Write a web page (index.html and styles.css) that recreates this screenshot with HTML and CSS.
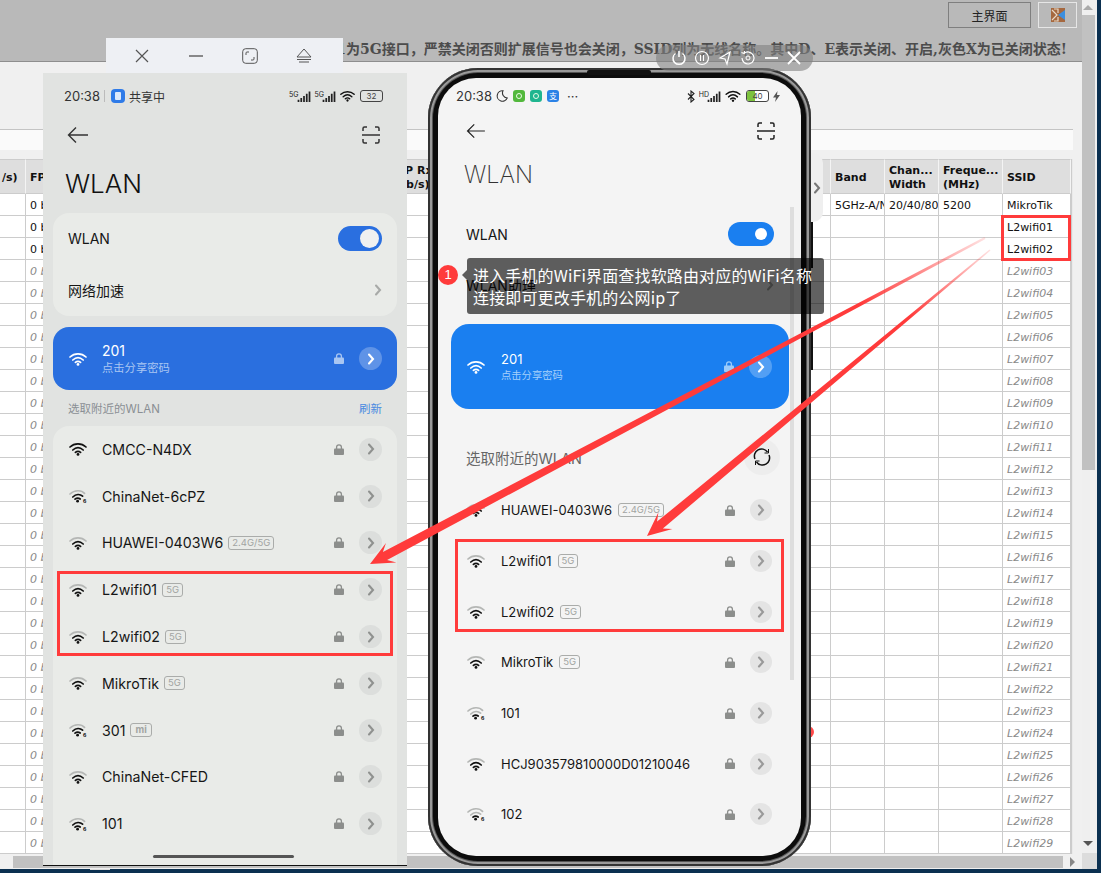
FILE: index.html
```html
<!DOCTYPE html>
<html lang="zh-CN">
<head>
  <meta charset="UTF-8" />
  <title>WLAN</title>
  <link rel="stylesheet" href="styles.css">
</head>
<body>
  <svg class="defs" width="0" height="0">
    <symbol id="wifi" viewBox="0 0 18 14">
      <path class="arc-outer" d="M1 5C5.500 .8 12.500 .8 17 5" />
      <path class="arc" d="M3.800 8C7 5 11 5 14.200 8" />
      <path class="arc" d="M6.400 10.400C8 9 10 9 11.600 10.400" />
      <circle class="dot" cx="9" cy="12.400" r="1.400" />
    </symbol>
    <symbol id="wifi6" viewBox="0 0 18 14">
      <path class="arc-outer" d="M1 5C5.500 .8 12.500 .8 15.500 4.400" />
      <path class="arc-mid" d="M3.800 8C7 5 11 5 13.600 7.200" />
      <path class="arc" d="M6 10.200C7.600 8.800 9.600 8.800 11.200 10" />
      <circle class="dot" cx="8.600" cy="12.200" r="1.400" />
      <text class="six" x="14" y="13.600">6</text>
    </symbol>
    <symbol id="lock" viewBox="0 0 10 11">
      <path d="M2.600 5V3.200a2.400 2.400 0 0 1 4.800 0V5" fill="none" stroke="currentColor" stroke-width="1.300" />
      <rect y="4.400" width="10" height="6.600" rx="1" fill="currentColor" />
    </symbol>
    <symbol id="chev" viewBox="0 0 8 12">
      <path d="M2 1.500 6 6 2 10.500" fill="none" stroke="currentColor" stroke-width="2.100" stroke-linecap="round" />
    </symbol>
    <symbol id="back" viewBox="0 0 22 18">
      <path d="M21 9H1.500M9 1.500 1.500 9 9 16.500" fill="none" stroke="currentColor" stroke-width="1.400" />
    </symbol>
    <symbol id="scan" viewBox="0 0 18 18">
      <path d="M1 5V2.500Q1 1 2.500 1H5M13 1h2.500Q17 1 17 2.500V5M1 13v2.500Q1 17 2.500 17H5M13 17h2.500q1.500 0 1.500-1.500V13M0 9h18" fill="none" stroke="currentColor" stroke-width="1.500" />
    </symbol>
    <symbol id="bars" viewBox="0 0 14 12">
      <path d="M1 12V9.500M4 12V7.500M7 12V5.500M10 12V3M13 12V.500" fill="none" stroke="currentColor" stroke-width="1.900" />
    </symbol>
  </svg>

  <div class="page">
    <div class="main">
      <div class="content">
        <header class="topbar">
          <div class="topbar-btns">
            <button class="btn">主界面</button>
            <button class="btn btn-icon">
              <svg width="14" height="14" viewBox="0 0 14 14"><rect width="14" height="14" fill="#a5683f"/><path d="M1 2 6 7 1 12M3 1h4v4M3 13h4V9" fill="none" stroke="#e8d9c8" stroke-width="1.200"/><path d="M14 2 7 7l7 5z" fill="#3b8fe0"/></svg>
            </button>
          </div>
          <p class="notice">1为5G接口，严禁关闭否则扩展信号也会关闭，SSID列为无线名称。其中D、E表示关闭、开启,灰色X为已关闭状态!</p>
        </header>
        <div class="tools"></div>
        <div class="strip"></div>
        <div class="table-wrap">
          <table class="grid">
            <colgroup>
              <col class="c-a"><col class="c-b"><col class="c-c"><col class="c-d"><col class="c-e"><col class="c-f"><col class="c-g"><col class="c-h">
            </colgroup>
            <thead>
              <tr><th>/s)</th><th>FP</th><th></th><th>IP Rx<br>(b/s)</th><th>Band</th><th>Chan...<br>Width</th><th>Freque...<br>(MHz)</th><th>SSID</th></tr>
            </thead>
            <tbody>
              <tr><td></td><td>0 b</td><td></td><td></td><td>5GHz-A/N</td><td>20/40/80</td><td>5200</td><td>MikroTik</td></tr>
              <tr><td></td><td>0 b</td><td></td><td></td><td></td><td></td><td></td><td>L2wifi01</td></tr>
              <tr><td></td><td>0 b</td><td></td><td></td><td></td><td></td><td></td><td>L2wifi02</td></tr>
              <tr class="off"><td></td><td>0 b</td><td></td><td></td><td></td><td></td><td></td><td>L2wifi03</td></tr>
              <tr class="off"><td></td><td>0 b</td><td></td><td></td><td></td><td></td><td></td><td>L2wifi04</td></tr>
              <tr class="off"><td></td><td>0 b</td><td></td><td></td><td></td><td></td><td></td><td>L2wifi05</td></tr>
              <tr class="off"><td></td><td>0 b</td><td></td><td></td><td></td><td></td><td></td><td>L2wifi06</td></tr>
              <tr class="off"><td></td><td>0 b</td><td></td><td></td><td></td><td></td><td></td><td>L2wifi07</td></tr>
              <tr class="off"><td></td><td>0 b</td><td></td><td></td><td></td><td></td><td></td><td>L2wifi08</td></tr>
              <tr class="off"><td></td><td>0 b</td><td></td><td></td><td></td><td></td><td></td><td>L2wifi09</td></tr>
              <tr class="off"><td></td><td>0 b</td><td></td><td></td><td></td><td></td><td></td><td>L2wifi10</td></tr>
              <tr class="off"><td></td><td>0 b</td><td></td><td></td><td></td><td></td><td></td><td>L2wifi11</td></tr>
              <tr class="off"><td></td><td>0 b</td><td></td><td></td><td></td><td></td><td></td><td>L2wifi12</td></tr>
              <tr class="off"><td></td><td>0 b</td><td></td><td></td><td></td><td></td><td></td><td>L2wifi13</td></tr>
              <tr class="off"><td></td><td>0 b</td><td></td><td></td><td></td><td></td><td></td><td>L2wifi14</td></tr>
              <tr class="off"><td></td><td>0 b</td><td></td><td></td><td></td><td></td><td></td><td>L2wifi15</td></tr>
              <tr class="off"><td></td><td>0 b</td><td></td><td></td><td></td><td></td><td></td><td>L2wifi16</td></tr>
              <tr class="off"><td></td><td>0 b</td><td></td><td></td><td></td><td></td><td></td><td>L2wifi17</td></tr>
              <tr class="off"><td></td><td>0 b</td><td></td><td></td><td></td><td></td><td></td><td>L2wifi18</td></tr>
              <tr class="off"><td></td><td>0 b</td><td></td><td></td><td></td><td></td><td></td><td>L2wifi19</td></tr>
              <tr class="off"><td></td><td>0 b</td><td></td><td></td><td></td><td></td><td></td><td>L2wifi20</td></tr>
              <tr class="off"><td></td><td>0 b</td><td></td><td></td><td></td><td></td><td></td><td>L2wifi21</td></tr>
              <tr class="off"><td></td><td>0 b</td><td></td><td></td><td></td><td></td><td></td><td>L2wifi22</td></tr>
              <tr class="off"><td></td><td>0 b</td><td></td><td></td><td></td><td></td><td></td><td>L2wifi23</td></tr>
              <tr class="off"><td></td><td>0 b</td><td></td><td></td><td></td><td></td><td></td><td>L2wifi24</td></tr>
              <tr class="off"><td></td><td>0 b</td><td></td><td></td><td></td><td></td><td></td><td>L2wifi25</td></tr>
              <tr class="off"><td></td><td>0 b</td><td></td><td></td><td></td><td></td><td></td><td>L2wifi26</td></tr>
              <tr class="off"><td></td><td>0 b</td><td></td><td></td><td></td><td></td><td></td><td>L2wifi27</td></tr>
              <tr class="off"><td></td><td>0 b</td><td></td><td></td><td></td><td></td><td></td><td>L2wifi28</td></tr>
              <tr class="off"><td></td><td>0 b</td><td></td><td></td><td></td><td></td><td></td><td>L2wifi29</td></tr>
            </tbody>
          </table>
        </div>
        <div class="hscroll">
          <div class="hscroll-thumb"></div>
          <span class="arrow-right"></span>
        </div>
      </div>
      <div class="vscroll">
        <span class="arrow-up"></span>
        <div class="vscroll-thumb"></div>
        <span class="arrow-down"></span>
        <div class="corner"></div>
      </div>
    </div>
    <div class="taskbar"><span class="task-mark"></span></div>
  </div>

  <!-- 表格上的红框 -->
  <div class="mark mark-ssid"></div>
  <div class="red-dot"></div>
  <div class="side-tab"><svg width="8" height="12"><use href="#chev"/></svg></div>

  <!-- 左边手机窗口 -->
  <div class="win-title">
    <span class="win-btn"><svg width="14" height="14" viewBox="0 0 14 14"><path d="M1 1 13 13M13 1 1 13" fill="none" stroke="#555" stroke-width="1.200"/></svg></span>
    <span class="win-btn"><svg width="14" height="14" viewBox="0 0 14 14"><path d="M0 7h14" stroke="#666" stroke-width="1.500"/></svg></span>
    <span class="win-btn"><svg width="16" height="16" viewBox="0 0 16 16"><rect x=".7" y=".7" width="14.600" height="14.600" rx="3" fill="none" stroke="#555"/><path d="M4 7V5Q4 4 5 4H7M12 9v2q0 1-1 1H9" fill="none" stroke="#555"/></svg></span>
    <span class="win-btn"><svg width="16" height="15" viewBox="0 0 16 15"><path d="M8 1 15 9H1zM1 11.500h14M3 14h10" fill="none" stroke="#555"/></svg></span>
  </div>
  <section class="win">
    <div class="win-status">
      <span class="time">20:38</span>
      <span class="sep"></span>
      <span class="share-icon"><i></i></span>
      <span class="share-text">共享中</span>
      <div class="status-right">
        <span class="sig"><small>5G</small><svg width="14" height="11"><use href="#bars"/></svg></span>
        <span class="sig"><small>5G</small><svg width="14" height="11"><use href="#bars"/></svg></span>
        <svg class="wifi wifi-solid" width="15" height="12"><use href="#wifi"/></svg>
        <span class="batt">32</span>
      </div>
    </div>
    <div class="win-nav">
      <svg width="22" height="18"><use href="#back"/></svg>
      <svg width="18" height="18"><use href="#scan"/></svg>
    </div>
    <h1 class="win-h1">WLAN</h1>
    <div class="card">
      <div class="card-row">
        <span>WLAN</span>
        <span class="toggle"></span>
      </div>
      <div class="card-row">
        <span>网络加速</span>
        <svg class="more" width="8" height="14"><use href="#chev"/></svg>
      </div>
    </div>
    <div class="current">
      <svg class="wifi wifi-white" width="18" height="14"><use href="#wifi"/></svg>
      <div class="current-text">
        <div class="current-name">201</div>
        <div class="current-sub">点击分享密码</div>
      </div>
      <svg class="lock" width="10" height="11"><use href="#lock"/></svg>
      <span class="go go-light"><svg width="8" height="12"><use href="#chev"/></svg></span>
    </div>
    <div class="sec-head">
      <span>选取附近的WLAN</span>
      <span class="refresh">刷新</span>
    </div>
    <div class="card net-list">
      <div class="net"><svg class="wifi wifi-solid" width="18" height="14"><use href="#wifi"/></svg><span class="net-name">CMCC-N4DX</span><svg class="lock" width="10" height="11"><use href="#lock"/></svg><span class="go"><svg width="8" height="12"><use href="#chev"/></svg></span></div>
      <div class="net"><svg class="wifi" width="18" height="14"><use href="#wifi6"/></svg><span class="net-name">ChinaNet-6cPZ</span><svg class="lock" width="10" height="11"><use href="#lock"/></svg><span class="go"><svg width="8" height="12"><use href="#chev"/></svg></span></div>
      <div class="net"><svg class="wifi" width="18" height="14"><use href="#wifi"/></svg><span class="net-name">HUAWEI-0403W6</span><span class="tag">2.4G/5G</span><svg class="lock" width="10" height="11"><use href="#lock"/></svg><span class="go"><svg width="8" height="12"><use href="#chev"/></svg></span></div>
      <div class="net"><svg class="wifi" width="18" height="14"><use href="#wifi"/></svg><span class="net-name">L2wifi01</span><span class="tag">5G</span><svg class="lock" width="10" height="11"><use href="#lock"/></svg><span class="go"><svg width="8" height="12"><use href="#chev"/></svg></span></div>
      <div class="net"><svg class="wifi" width="18" height="14"><use href="#wifi"/></svg><span class="net-name">L2wifi02</span><span class="tag">5G</span><svg class="lock" width="10" height="11"><use href="#lock"/></svg><span class="go"><svg width="8" height="12"><use href="#chev"/></svg></span></div>
      <div class="net"><svg class="wifi" width="18" height="14"><use href="#wifi"/></svg><span class="net-name">MikroTik</span><span class="tag">5G</span><svg class="lock" width="10" height="11"><use href="#lock"/></svg><span class="go"><svg width="8" height="12"><use href="#chev"/></svg></span></div>
      <div class="net"><svg class="wifi" width="18" height="14"><use href="#wifi6"/></svg><span class="net-name">301</span><span class="tag tag-mi">mi</span><svg class="lock" width="10" height="11"><use href="#lock"/></svg><span class="go"><svg width="8" height="12"><use href="#chev"/></svg></span></div>
      <div class="net"><svg class="wifi" width="18" height="14"><use href="#wifi"/></svg><span class="net-name">ChinaNet-CFED</span><svg class="lock" width="10" height="11"><use href="#lock"/></svg><span class="go"><svg width="8" height="12"><use href="#chev"/></svg></span></div>
      <div class="net"><svg class="wifi" width="18" height="14"><use href="#wifi6"/></svg><span class="net-name">101</span><svg class="lock" width="10" height="11"><use href="#lock"/></svg><span class="go"><svg width="8" height="12"><use href="#chev"/></svg></span></div>
    </div>
    <div class="home-bar"></div>
  </section>
  <div class="mark mark-left"></div>

  <!-- 右边手机 -->
  <span class="phone-key phone-key-a"></span>
  <span class="phone-key phone-key-b"></span>
  <section class="phone">
    <div class="phone-notch"></div>
    <div class="screen">
      <div class="phone-status">
        <span class="time">20:38</span>
        <svg class="moon" width="12" height="12" viewBox="0 0 12 12"><path d="M7 .8A5.200 5.200 0 1 0 11.200 8 5 5 0 0 1 7 .8z" fill="none" stroke="#333" stroke-width="1.100"/></svg>
        <span class="app app-green"></span>
        <span class="app app-teal"></span>
        <span class="app app-blue">支</span>
        <span class="dots">···</span>
        <div class="status-right">
          <svg width="8" height="13" viewBox="0 0 8 13"><path d="M1 3.500 7 9.500 4 12V1L7 3.500 1 9.500" fill="none" stroke="#222" stroke-width="1.100"/></svg>
          <span class="sig"><small>HD</small><svg width="14" height="11"><use href="#bars"/></svg></span>
          <svg class="wifi wifi-solid" width="16" height="12"><use href="#wifi"/></svg>
          <span class="batt batt-charge"><i></i><b>40</b></span>
          <svg width="7" height="11" viewBox="0 0 7 11"><path d="M4.500 0 0 6.500h3L2 11l5-7H4z" fill="#555"/></svg>
        </div>
      </div>
      <div class="phone-nav">
        <svg width="20" height="16"><use href="#back"/></svg>
        <svg width="18" height="18"><use href="#scan"/></svg>
      </div>
      <h1 class="phone-h1">WLAN</h1>
      <div class="phone-row phone-row-a">
        <span>WLAN</span>
        <span class="toggle toggle-b"></span>
      </div>
      <div class="phone-row phone-row-b">
        <span>WLAN助理</span>
        <svg class="more" width="8" height="14"><use href="#chev"/></svg>
      </div>
      <div class="current current-b">
        <svg class="wifi wifi-white" width="18" height="14"><use href="#wifi"/></svg>
        <div class="current-text">
          <div class="current-name">201</div>
          <div class="current-sub">点击分享密码</div>
        </div>
        <svg class="lock" width="10" height="11"><use href="#lock"/></svg>
        <span class="go go-light"><svg width="8" height="12"><use href="#chev"/></svg></span>
      </div>
      <div class="phone-sec">
        <span>选取附近的WLAN</span>
        <span class="reload">
          <svg width="18" height="18" viewBox="0 0 18 18"><path d="M2 11A7.200 7.200 0 0 1 14.500 4M16 7A7.200 7.200 0 0 1 3.500 14" fill="none" stroke="#111" stroke-width="1.500"/><path d="M15.500 1v4h-4M2.500 17v-4h4" fill="none" stroke="#111" stroke-width="1"/></svg>
        </span>
      </div>
      <div class="net net-b"><svg class="wifi" width="18" height="14"><use href="#wifi"/></svg><span class="net-name">HUAWEI-0403W6</span><span class="tag">2.4G/5G</span><svg class="lock" width="10" height="11"><use href="#lock"/></svg><span class="go"><svg width="8" height="12"><use href="#chev"/></svg></span></div>
      <div class="net net-b"><svg class="wifi" width="18" height="14"><use href="#wifi"/></svg><span class="net-name">L2wifi01</span><span class="tag">5G</span><svg class="lock" width="10" height="11"><use href="#lock"/></svg><span class="go"><svg width="8" height="12"><use href="#chev"/></svg></span></div>
      <div class="net net-b"><svg class="wifi" width="18" height="14"><use href="#wifi"/></svg><span class="net-name">L2wifi02</span><span class="tag">5G</span><svg class="lock" width="10" height="11"><use href="#lock"/></svg><span class="go"><svg width="8" height="12"><use href="#chev"/></svg></span></div>
      <div class="net net-b"><svg class="wifi" width="18" height="14"><use href="#wifi"/></svg><span class="net-name">MikroTik</span><span class="tag">5G</span><svg class="lock" width="10" height="11"><use href="#lock"/></svg><span class="go"><svg width="8" height="12"><use href="#chev"/></svg></span></div>
      <div class="net net-b"><svg class="wifi" width="18" height="14"><use href="#wifi6"/></svg><span class="net-name">101</span><svg class="lock" width="10" height="11"><use href="#lock"/></svg><span class="go"><svg width="8" height="12"><use href="#chev"/></svg></span></div>
      <div class="net net-b"><svg class="wifi" width="18" height="14"><use href="#wifi"/></svg><span class="net-name">HCJ903579810000D01210046</span><svg class="lock" width="10" height="11"><use href="#lock"/></svg><span class="go"><svg width="8" height="12"><use href="#chev"/></svg></span></div>
      <div class="net net-b"><svg class="wifi" width="18" height="14"><use href="#wifi6"/></svg><span class="net-name">102</span><svg class="lock" width="10" height="11"><use href="#lock"/></svg><span class="go"><svg width="8" height="12"><use href="#chev"/></svg></span></div>
      <div class="phone-scroll"></div>
    </div>
  </section>
  <div class="mark mark-right"></div>

  <!-- 录屏工具条 -->
  <div class="float-bar">
    <svg width="16" height="16" viewBox="0 0 16 16"><path d="M4.500 3.500a6 6 0 1 0 7 0M8 1v6" fill="none" stroke="#fff" stroke-width="1.500"/></svg>
    <svg width="16" height="16" viewBox="0 0 16 16"><circle cx="8" cy="8" r="6.500" fill="none" stroke="#fff" stroke-width="1.200"/><path d="M6.500 5v6M9.500 5v6" stroke="#fff"/></svg>
    <svg width="16" height="16" viewBox="0 0 16 16"><path d="M3 8 13 2 10 14 8 9z" fill="none" stroke="#fff" stroke-width="1.200"/></svg>
    <svg width="16" height="16" viewBox="0 0 16 16"><path d="M4 3.500a6 6 0 1 1-2 4.500M1.500 2.500 4 3.500 4.500 1" fill="none" stroke="#fff" stroke-width="1.200"/><circle cx="8" cy="8" r="2" fill="none" stroke="#fff"/></svg>
    <svg width="16" height="16" viewBox="0 0 16 16"><path d="M2 8h13" stroke="#fff" stroke-width="1.800"/></svg>
    <svg width="16" height="16" viewBox="0 0 16 16"><path d="M2 2 14 14M14 2 2 14" stroke="#fff" stroke-width="1.800"/></svg>
  </div>

  <!-- 红色箭头 -->
  <svg class="arrows" width="1101" height="873" viewBox="0 0 1101 873">
    <defs>
      <linearGradient id="fadeA" gradientUnits="userSpaceOnUse" x1="985" y1="238" x2="860" y2="304">
        <stop offset="0" stop-color="#ff3b3b" stop-opacity=".15"/>
        <stop offset="1" stop-color="#ff3b3b"/>
      </linearGradient>
      <linearGradient id="fadeB" gradientUnits="userSpaceOnUse" x1="990" y1="250" x2="910" y2="317">
        <stop offset="0" stop-color="#ff3b3b" stop-opacity=".15"/>
        <stop offset="1" stop-color="#ff3b3b"/>
      </linearGradient>
    </defs>
    <polygon fill="url(#fadeA)" points="985.500,239 387.100,560 396.400,562.400 370,564 386,543 382.900,552 984.500,237"/>
    <polygon fill="url(#fadeB)" points="990.500,250.500 662.900,528.600 672.400,529 647,536 658.400,512.200 657.100,521.600 989.500,249.500"/>
  </svg>

  <!-- 提示框 -->
  <span class="tip-dot">1</span>
  <div class="tip">进入手机的WiFi界面查找软路由对应的WiFi名称<br>连接即可更改手机的公网ip了</div>
</body>
</html>
```

FILE: styles.css
```css
html, body {
  margin: 0;
  padding: 0;
}
body {
  position: relative;
  width: 1101px;
  height: 873px;
  overflow: hidden;
  background: #0b3050;
  font-family: "DejaVu Sans", "Noto Sans CJK SC", sans-serif;
  font-size: 11px;
}
.defs {
  position: absolute;
}
.arc, .arc-outer, .arc-mid {
  fill: none;
  stroke: currentColor;
  stroke-width: 1.7;
  stroke-linecap: round;
}
.arc-outer {
  stroke: var(--outer, #b5b7b5);
}
.arc-mid {
  stroke: var(--mid, currentColor);
}
.dot {
  fill: currentColor;
}
.six {
  font: bold 6px "Liberation Sans", sans-serif;
  fill: currentColor;
}

/* 底层页面 */
.page {
  display: flex;
  flex-direction: column;
  height: 873px;
}
.main {
  display: flex;
  height: 869px;
}
.content {
  width: 1082px;
  display: flex;
  flex-direction: column;
  background: #f0f0f0;
}
.topbar {
  height: 61px;
  background: #b9b9b9;
  border-bottom: 1px solid #8e8e8e;
  display: flex;
  flex-direction: column;
  align-items: flex-end;
}
.topbar-btns {
  display: flex;
  gap: 7px;
  padding: 2px 5px 0 0;
}
.btn {
  height: 26px;
  width: 83px;
  padding: 0;
  background: #b9b9b9;
  border: 1px solid #7f7f7f;
  font: 12px "Noto Sans CJK SC", sans-serif;
  color: #222;
}
.btn-icon {
  width: 39px;
  border-color: #e6e6e6;
  display: flex;
  align-items: center;
  justify-content: center;
}
.notice {
  margin: 12px 15px 0 0;
  white-space: nowrap;
  font: bold 14px/18px "DejaVu Serif", "Noto Sans CJK SC", serif;
  color: #4c4c4c;
}
.tools {
  height: 67px;
}
.strip {
  height: 20px;
  margin-right: 9px;
  background: #fafafa;
  border-top: 1px solid #c4c4c4;
}
.table-wrap {
  margin-top: 9px;
  height: 695px;
  overflow: hidden;
}
.grid {
  width: 1071px;
  table-layout: fixed;
  border-collapse: separate;
  border-spacing: 0;
  background: #fff;
  color: #111;
  box-shadow: 1px 0 1px #ccc;
}
.c-a { width: 26px; }
.c-b { width: 58px; }
.c-c { width: 313px; }
.c-d { width: 434px; }
.c-e { width: 54px; }
.c-f { width: 54px; }
.c-g { width: 64px; }
.c-h { width: 68px; }
.grid th {
  height: 35px;
  padding: 2px 0 0 4px;
  box-sizing: border-box;
  background: #dedede;
  border-top: 1px solid #ccc;
  border-right: 1px solid #f4f4f4;
  border-bottom: 1px solid #ccc;
  text-align: left;
  font-weight: bold;
  line-height: 14px;
  overflow: hidden;
  white-space: nowrap;
}
.grid td {
  height: 22px;
  padding: 1px 0 0 4px;
  box-sizing: border-box;
  border-right: 1px solid #ccc;
  border-bottom: 1px solid #ccc;
  overflow: hidden;
  white-space: nowrap;
}
.grid .off td {
  font-style: italic;
  color: #8a8a8a;
}
.grid th:first-child {
  padding-left: 2px;
}
.hscroll {
  height: 15px;
  display: flex;
  align-items: center;
  padding-left: 13px;
}
.hscroll-thumb {
  width: 1050px;
  height: 12px;
  background: #c1c1c1;
}
.arrow-right {
  margin-left: 7px;
  border-left: 5px solid #888;
  border-top: 5px solid transparent;
  border-bottom: 5px solid transparent;
}
.vscroll {
  width: 15px;
  margin-right: 4px;
  background: #efefef;
  display: flex;
  flex-direction: column;
  align-items: flex-start;
}
.arrow-up {
  margin: 5px 0 5px 1px;
  border-bottom: 5px solid #aaa;
  border-left: 5px solid transparent;
  border-right: 5px solid transparent;
}
.vscroll-thumb {
  width: 13px;
  height: 455px;
  background: #c1c1c1;
}
.arrow-down {
  margin: auto 0 7px 1px;
  border-top: 5px solid #555;
  border-left: 5px solid transparent;
  border-right: 5px solid transparent;
}
.corner {
  width: 15px;
  height: 16px;
  background: #dcdcdc;
}
.taskbar {
  height: 4px;
  background: #0b3050;
}
.task-mark {
  display: block;
  width: 20px;
  height: 1px;
  margin-left: 90px;
  background: #ddd;
}

/* 红框 */
.mark {
  position: absolute;
  box-sizing: border-box;
  border: 3px solid #ff3b3b;
}
.mark-ssid { left: 1001px; top: 215px; width: 70px; height: 46px; }
.mark-left { left: 57px; top: 571px; width: 336px; height: 85px; }
.mark-right { left: 455px; top: 539px; width: 329px; height: 93px; }
.red-dot {
  position: absolute;
  left: 802px;
  top: 726px;
  width: 12px;
  height: 12px;
  border-radius: 50%;
  background: #ff4a4a;
}
.side-tab {
  position: absolute;
  left: 805px;
  top: 153px;
  width: 18px;
  height: 69px;
  padding-right: 2px;
  box-sizing: border-box;
  display: flex;
  align-items: center;
  justify-content: flex-end;
  background: #efefef;
  border-radius: 0 10px 10px 0;
  color: #777;
}

/* 左窗口 */
.win-title {
  position: absolute;
  left: 106px;
  top: 38px;
  width: 237px;
  height: 35px;
  padding-left: 9px;
  box-sizing: border-box;
  background: #eef0f4;
  display: flex;
  align-items: center;
}
.win-btn {
  width: 54px;
  display: flex;
  justify-content: center;
}
.win {
  position: absolute;
  left: 43px;
  top: 73px;
  width: 364px;
  height: 793px;
  box-sizing: border-box;
  overflow: hidden;
  background: #e1e3e1;
  border-bottom: 1px solid #111;
  font-family: Inter, "Noto Sans CJK SC", sans-serif;
  color: #161616;
}
.win-status {
  height: 46px;
  padding: 0 24px 0 21px;
  display: flex;
  align-items: center;
}
.time {
  font-size: 13px;
  color: #333;
}
.sep {
  width: 1px;
  height: 12px;
  margin: 0 6px 0 4px;
  background: #bbb;
}
.share-icon {
  width: 14px;
  height: 14px;
  margin-right: 4px;
  border-radius: 4px;
  background: #2f7be8;
  display: flex;
  align-items: center;
  justify-content: center;
}
.share-icon i {
  width: 6px;
  height: 8px;
  border-radius: 1px;
  background: #dce9fb;
}
.share-text {
  font-size: 12px;
  color: #333;
}
.status-right {
  margin-left: auto;
  display: flex;
  align-items: center;
  gap: 4px;
  color: #222;
}
.sig {
  display: flex;
  align-items: flex-end;
}
.sig small {
  align-self: flex-start;
  margin-right: -2px;
  font-size: 7px;
  line-height: 7px;
}
.batt {
  width: 21px;
  height: 10px;
  margin-left: 1px;
  border: 1px solid #444;
  border-radius: 3px;
  font-size: 8px;
  line-height: 10px;
  text-align: center;
  color: #444;
  position: relative;
}
.win-nav {
  height: 32px;
  padding: 0 27px 0 24px;
  display: flex;
  align-items: center;
  justify-content: space-between;
  color: #333;
}
.win-h1 {
  height: 62px;
  margin: 0;
  padding-left: 22px;
  font-size: 26px;
  font-weight: 300;
  line-height: 66px;
  color: #111;
}
.card {
  margin: 0 10px;
  border-radius: 16px;
  background: #e9ebe8;
}
.card-row {
  height: 51.5px;
  padding: 0 15px;
  display: flex;
  align-items: center;
  justify-content: space-between;
  font-size: 14px;
}
.toggle {
  position: relative;
  width: 44px;
  height: 25px;
  border-radius: 13px;
  background: #2a6fe0;
}
.toggle::after {
  content: "";
  position: absolute;
  right: 3px;
  top: 3px;
  width: 19px;
  height: 19px;
  border-radius: 50%;
  background: #f0f0f0;
}
.more {
  color: #a8aaa8;
}
.current {
  margin: 11px 10px 0;
  height: 63px;
  padding: 0 15px 0 16px;
  box-sizing: border-box;
  border-radius: 16px;
  background: #2a6fdf;
  display: flex;
  align-items: center;
  color: #fff;
}
.current-text {
  margin-left: 15px;
}
.current-name {
  font-size: 14px;
  line-height: 18px;
}
.current-sub {
  font-size: 11.300px;
  line-height: 16px;
  color: #a9c6f2;
}
.wifi {
  flex: none;
  color: #111;
}
.wifi-solid {
  --outer: currentColor;
}
.wifi-white {
  color: #fff;
  --outer: #fff;
}
.lock {
  flex: none;
  margin-left: auto;
  color: #8c8e8c;
}
.current .lock {
  color: #a9c6f2;
}
.go {
  flex: none;
  width: 23px;
  height: 23px;
  margin-left: 15px;
  border-radius: 50%;
  background: #dcdedc;
  color: #8f918f;
  display: flex;
  align-items: center;
  justify-content: center;
}
.go-light {
  background: rgba(255, 255, 255, 0.25);
  color: #fff;
}
.sec-head {
  height: 36px;
  padding: 0 15px;
  margin: 0 10px;
  display: flex;
  align-items: center;
  justify-content: space-between;
  font-size: 11.500px;
  color: #8a8f94;
}
.refresh {
  color: #4a8ae0;
}
.net-list {
  height: 480px;
}
.net {
  height: 46.800px;
  padding: 0 15px 0 16px;
  display: flex;
  align-items: center;
}
.net-name {
  margin-left: 15px;
  font-size: 14.200px;
  white-space: nowrap;
}
.tag {
  margin-left: 5px;
  padding: 0 3px;
  border: 1px solid #aaacaa;
  border-radius: 3px;
  font-size: 9.500px;
  line-height: 12px;
  color: #a2a4a2;
}
.tag-mi {
  padding: 0 4px;
  font-weight: 700;
}
.home-bar {
  position: absolute;
  left: 110px;
  top: 782px;
  width: 141px;
  height: 3px;
  border-radius: 2px;
  background: #555;
}

/* 右手机 */
.phone {
  position: absolute;
  left: 428px;
  top: 68px;
  width: 383px;
  height: 798px;
  padding: 10px;
  box-sizing: border-box;
  border-radius: 50px;
  background: #0c0c0c;
  box-shadow: inset 0 0 0 2px #333, inset 0 0 0 4px #9a9a9a, inset 0 0 0 5px #555;
  font-family: Inter, "Noto Sans CJK SC", sans-serif;
  color: #161616;
}
.phone-key {
  position: absolute;
  left: 809px;
  width: 4px;
  background: #111;
}
.phone-key-a { top: 222px; height: 46px; }
.phone-key-b { top: 328px; height: 42px; }
.phone-notch {
  position: absolute;
  left: 159px;
  top: 2px;
  width: 64px;
  height: 5px;
  background: #111;
  border-radius: 2px;
}
.screen {
  position: relative;
  height: 778px;
  overflow: hidden;
  border-radius: 38px;
  background: #f4f4f4;
}
.phone-status {
  height: 36px;
  padding: 0 21px 0 18px;
  display: flex;
  align-items: center;
}
.moon {
  margin-left: 4px;
}
.app {
  position: relative;
  width: 12px;
  height: 12px;
  margin-left: 5px;
  border-radius: 3px;
  font-size: 8px;
  line-height: 12px;
  text-align: center;
  color: #fff;
}
.app-green { background: #52b83c; }
.app-teal { background: #1fb58f; }
.app-blue { background: #2a82e6; }
.app-green::after, .app-teal::after {
  content: "";
  position: absolute;
  left: 3px;
  top: 3px;
  width: 4px;
  height: 4px;
  border: 1px solid #eafbe6;
  border-radius: 50%;
}
.dots {
  margin-left: 8px;
  font-size: 13px;
  color: #333;
}
.batt-charge {
  background: #fff;
  overflow: hidden;
}
.batt-charge i {
  position: absolute;
  left: 0;
  top: 0;
  bottom: 0;
  width: 40%;
  background: #7cc23e;
}
.batt-charge b {
  position: relative;
  font-weight: 400;
}
.phone-nav {
  height: 34px;
  padding: 0 26px 0 28px;
  display: flex;
  align-items: center;
  justify-content: space-between;
  color: #222;
}
.phone-h1 {
  height: 56px;
  margin: 0;
  padding-left: 26px;
  font-size: 23.500px;
  font-weight: 200;
  line-height: 54px;
  color: #333;
}
.phone-row {
  padding: 0 27px 0 28px;
  display: flex;
  align-items: center;
  justify-content: space-between;
  font-size: 14px;
}
.phone-row-a { height: 60px; }
.phone-row-b { height: 42px; }
.toggle-b {
  width: 46px;
  height: 24px;
  background: #1a7ff0;
}
.toggle-b::after {
  right: 7px;
  top: 6px;
  width: 12px;
  height: 12px;
  background: #fff;
}
.current-b {
  margin: 18px 12px 0 13px;
  height: 85px;
  padding: 0 17px 0 16px;
  border-radius: 18px;
  background: #1a7ff0;
}
.current-b .current-text {
  margin-left: 16px;
}
.current-b .current-name {
  font-size: 13px;
  line-height: 17px;
}
.current-b .current-sub {
  font-size: 10.300px;
  line-height: 14px;
  color: #a5d0fb;
}
.current-b .lock {
  color: #9ccbfa;
}
.phone-sec {
  height: 56px;
  padding: 20px 21px 0 28px;
  display: flex;
  align-items: center;
  justify-content: space-between;
  font-size: 14.500px;
  color: #666;
}
.reload {
  width: 36px;
  height: 36px;
  border-radius: 50%;
  background: #ededed;
  display: flex;
  align-items: center;
  justify-content: center;
}
.net-b {
  --mid: #b5b7b5;
  height: 50.700px;
  padding: 0 29px 0 29px;
}
.net-b .net-name {
  margin-left: 16px;
  font-size: 13px;
}
.net-b .tag {
  margin-left: 6px;
}
.net-b .go {
  margin-left: 15px;
  width: 22px;
  height: 22px;
  background: #e4e4e4;
  color: #999;
}
.phone-scroll {
  position: absolute;
  right: 7px;
  top: 129px;
  width: 4px;
  height: 473px;
  background: #dedede;
}

/* 录屏工具条 */
.float-bar {
  position: absolute;
  left: 656px;
  top: 45px;
  width: 157px;
  height: 26px;
  padding: 0 11px 0 15px;
  box-sizing: border-box;
  border-radius: 13px;
  background: rgba(128, 128, 128, 0.6);
  display: flex;
  align-items: center;
  justify-content: space-between;
}
.arrows {
  position: absolute;
  left: 0;
  top: 0;
}

/* 提示框 */
.tip-dot {
  position: absolute;
  left: 438px;
  top: 265px;
  width: 20px;
  height: 20px;
  border-radius: 50%;
  background: #ff3b3b;
  color: #fff;
  font: 13px/20px "Liberation Sans", sans-serif;
  text-align: center;
}
.tip {
  position: absolute;
  left: 467px;
  top: 258px;
  width: 357px;
  height: 56px;
  padding: 6px 0 0 6px;
  box-sizing: border-box;
  border-radius: 3px;
  background: rgba(0, 0, 0, 0.62);
  color: #fff;
  font: 16px/22px "Noto Sans CJK SC", sans-serif;
  letter-spacing: 0.15px;
  white-space: nowrap;
}
.tip::before {
  content: "";
  position: absolute;
  left: -5px;
  top: 12px;
  border-right: 5px solid rgba(0, 0, 0, 0.62);
  border-top: 5px solid transparent;
  border-bottom: 5px solid transparent;
}
```
